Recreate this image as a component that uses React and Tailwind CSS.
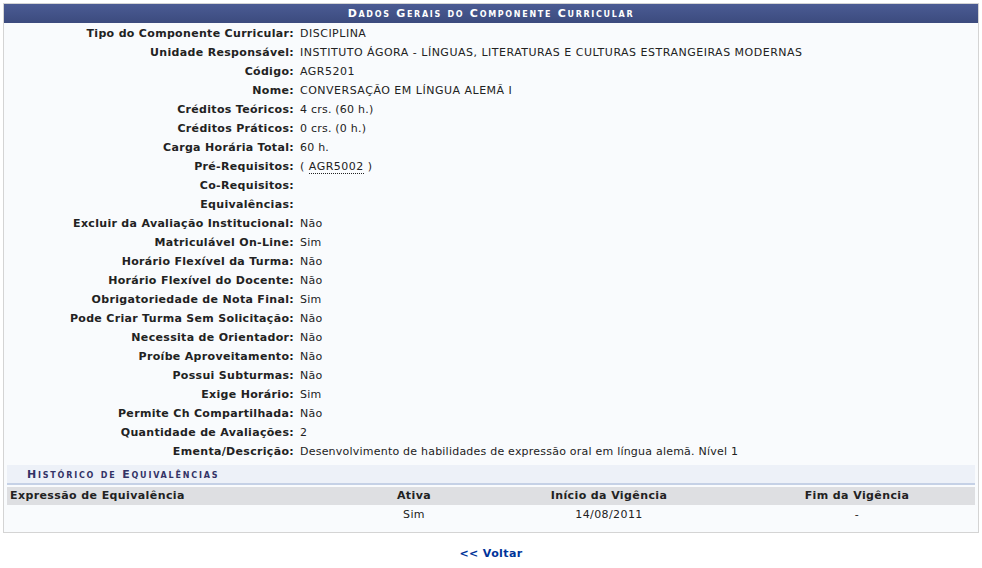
import React from 'react';

const rows = [
  ['Tipo do Componente Curricular:', 'DISCIPLINA'],
  ['Unidade Responsável:', 'INSTITUTO ÁGORA - LÍNGUAS, LITERATURAS E CULTURAS ESTRANGEIRAS MODERNAS'],
  ['Código:', 'AGR5201'],
  ['Nome:', 'CONVERSAÇÃO EM LÍNGUA ALEMÃ I'],
  ['Créditos Teóricos:', '4 crs. (60 h.)'],
  ['Créditos Práticos:', '0 crs. (0 h.)'],
  ['Carga Horária Total:', '60 h.'],
  ['Pré-Requisitos:', 'prereq'],
  ['Co-Requisitos:', ''],
  ['Equivalências:', ''],
  ['Excluir da Avaliação Institucional:', 'Não'],
  ['Matriculável On-Line:', 'Sim'],
  ['Horário Flexível da Turma:', 'Não'],
  ['Horário Flexível do Docente:', 'Não'],
  ['Obrigatoriedade de Nota Final:', 'Sim'],
  ['Pode Criar Turma Sem Solicitação:', 'Não'],
  ['Necessita de Orientador:', 'Não'],
  ['Proíbe Aproveitamento:', 'Não'],
  ['Possui Subturmas:', 'Não'],
  ['Exige Horário:', 'Sim'],
  ['Permite Ch Compartilhada:', 'Não'],
  ['Quantidade de Avaliações:', '2'],
  ['Ementa/Descrição:', 'Desenvolvimento de habilidades de expressão oral em língua alemã. Nível 1'],
];

export default function App() {
  return (
    <div className="min-h-screen bg-white pt-[3px] px-[3px] text-[11px] text-[#222] font-['DejaVu_Sans',Verdana,sans-serif]">
      <div className="w-[976px] border border-[#d4d4d4] bg-[#f9fbfd]">
        <div className="h-[19px] bg-gradient-to-b from-[#4b5b93] via-[#435389] to-[#3c4b7e] text-white font-bold text-center [font-variant:small-caps] tracking-[1.7px] leading-[19px]">
          Dados Gerais do Componente Curricular
        </div>

        <div className="pt-[2px]">
          {rows.map(([label, value]) => (
            <div key={label} className="flex h-[19px] items-center">
              <div className="w-[290px] shrink-0 text-right font-bold tracking-[0.32px]">{label}</div>
              <div className={value === value.toUpperCase() ? 'pl-[6px] whitespace-nowrap tracking-[0.5px]' : 'pl-[6px] whitespace-nowrap tracking-[0.22px]'}>
                {value === 'prereq' ? (
                  <span className="tracking-[0.5px]">( <span className="border-b border-dotted border-[#222]">AGR5002</span> )</span>
                ) : value}
              </div>
            </div>
          ))}
        </div>

        <div className="mx-[3px] mt-[3px] mb-[6px]">
          <div className="h-[18px] bg-[#edf1f8] pl-[20px] leading-[19px] font-bold text-[#333366] [font-variant:small-caps] tracking-[1.8px]">
            Histórico de Equivalências
          </div>
          <div className="h-[2px] bg-[#c5d1e6] mb-[2px]" />
          <div className="grid grid-cols-[343px_128px_262px_234px] h-[18px] items-center bg-[#dedfe2] font-bold tracking-[0.4px]">
            <div className="pl-[3px]">Expressão de Equivalência</div>
            <div className="text-center">Ativa</div>
            <div className="text-center">Início da Vigência</div>
            <div className="text-center">Fim da Vigência</div>
          </div>
          <div className="grid grid-cols-[343px_128px_262px_234px] h-[21px] items-center tracking-[0.4px]">
            <div className="pl-[3px]"></div>
            <div className="text-center">Sim</div>
            <div className="text-center">14/08/2011</div>
            <div className="text-center">-</div>
          </div>
        </div>
      </div>

      <div className="w-[976px] text-center mt-[13px] tracking-[0.4px]">
        <a href="#" className="font-bold text-[#003399] no-underline">&lt;&lt; Voltar</a>
      </div>
    </div>
  );
}
